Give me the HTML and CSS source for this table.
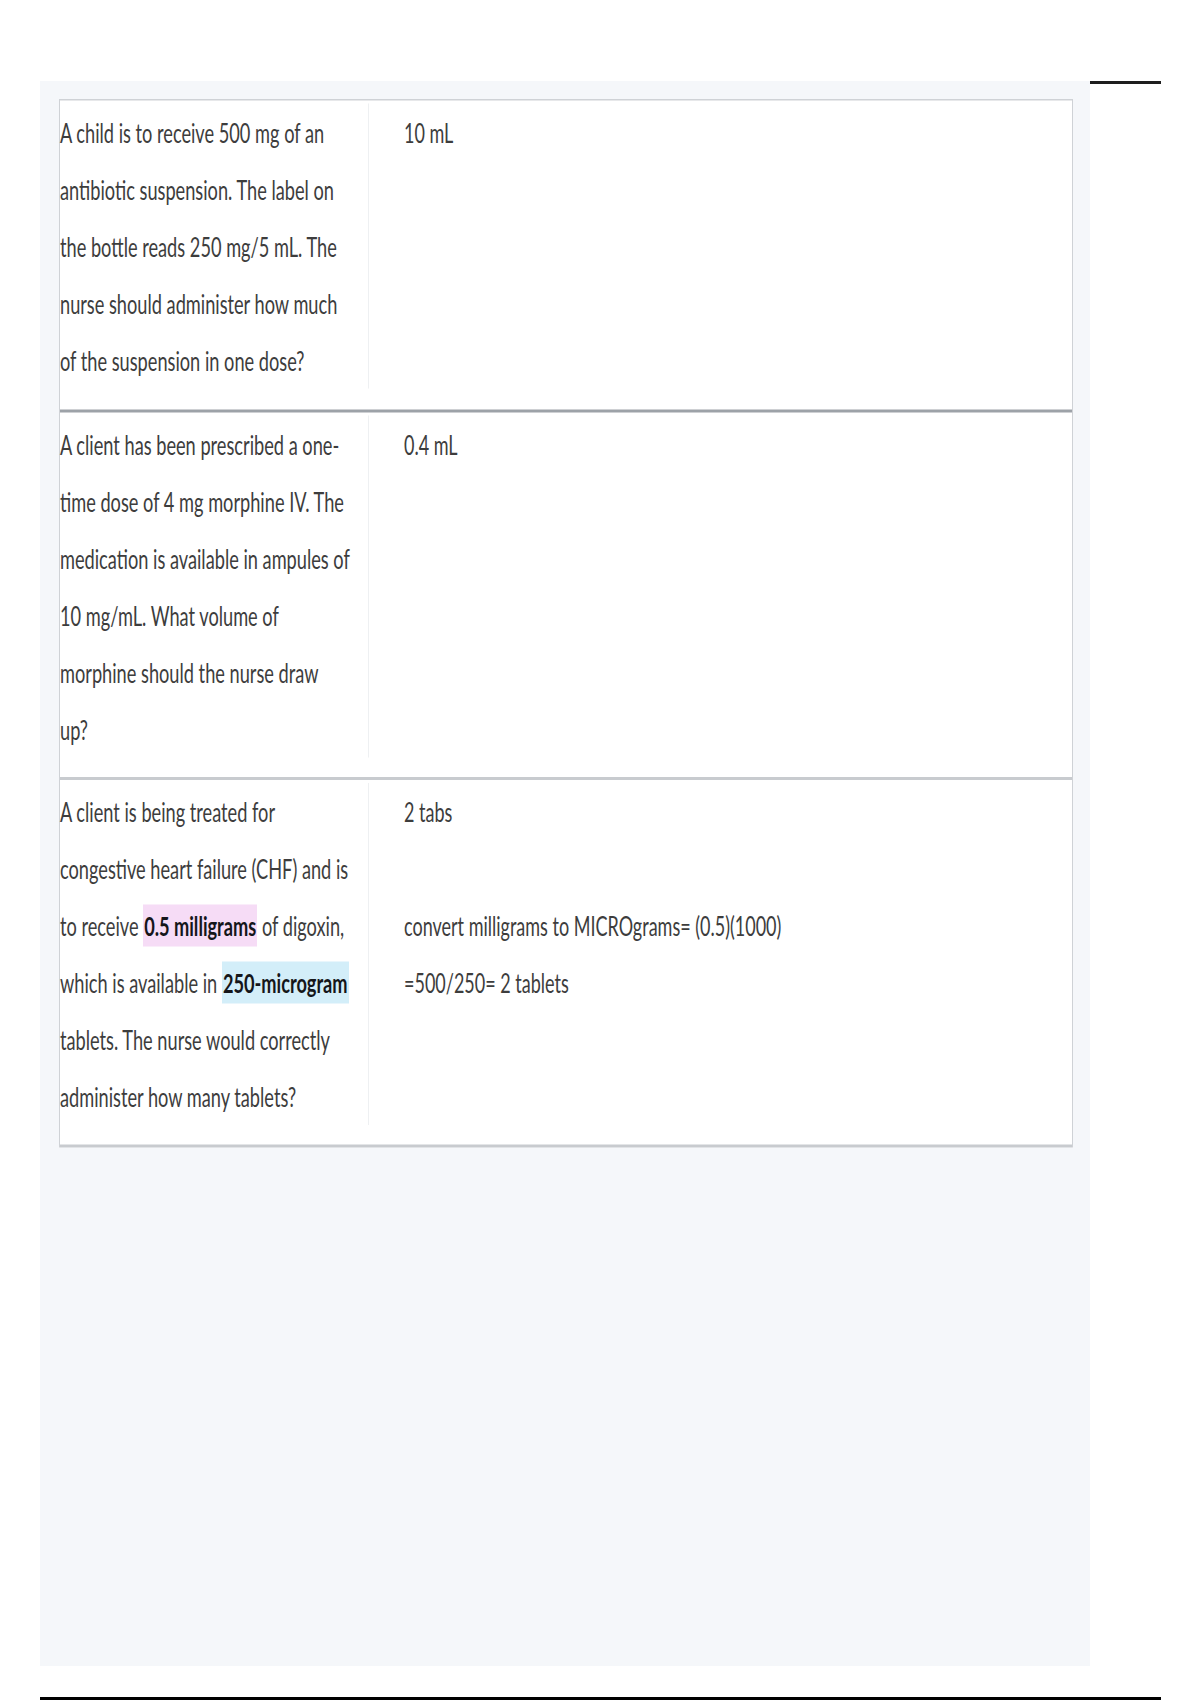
FILE: index.html
```html
<!DOCTYPE html>
<html lang="en">
<head>
    <meta charset="UTF-8">
    <meta name="viewport" content="width=device-width, initial-scale=1.0">
    <title>Dosage Calculations</title>
    <link rel="stylesheet" href="styles.css">
</head>
<body>
    <div class="page">
        <div class="top">
            <div class="panel">
                <div class="qa-table">
                    <div class="qa-row row-dark">
                        <div class="q">A child is to receive 500 mg of an antibiotic suspension. The label on the bottle reads 250 mg/5 mL. The nurse should administer how much of the suspension in one dose?</div>
                        <div class="a">10 mL</div>
                    </div>
                    <div class="qa-row">
                        <div class="q">A client has been prescribed a one-time dose of 4 mg morphine IV. The medication is available in ampules of 10 mg/mL. What volume of morphine should the nurse draw<br>up?</div>
                        <div class="a">0.4 mL</div>
                    </div>
                    <div class="qa-row">
                        <div class="q">A client is being treated for congestive heart failure (CHF) and is to receive <span class="hl hl-pink">0.5 milligrams</span> of digoxin, which is available in <span class="hl hl-blue">250-microgram</span> tablets. The nurse would correctly administer how many tablets?</div>
                        <div class="a">
                            <p>2 tabs</p>
                            <p class="gap">convert milligrams to MICROgrams= (0.5)(1000)</p>
                            <p>=500/250= 2 tablets</p>
                        </div>
                    </div>
                </div>
            </div>
            <div class="side"></div>
        </div>
        <div class="bottom-rule"></div>
    </div>
</body>
</html>
```

FILE: styles.css
```css
body {
    margin: 0;
    background-color: #ffffff;
    font-family: Lato, "Open Sans", sans-serif;
    color: #3d3d3d;
}
.page {
    width: 1121px;
    margin-left: 40px;
    padding-top: 81px;
}
.top {
    display: flex;
}
.panel {
    width: 1050px;
    height: 1585px;
    box-sizing: border-box;
    padding: 18px 17px 0 19px;
    background-color: #f5f7fa;
    overflow: hidden;
}
.side {
    flex: 1;
    border-top: 3px solid #1e1e1e;
    height: 0;
}
.bottom-rule {
    margin-top: 31px;
    border-top: 3px solid #000000;
}

/* screenshot is stretched vertically, so the table is scaled the same way */
.qa-table {
    background-color: #ffffff;
    border: 1px solid #cfd2d6;
    border-bottom: none;
    transform: scaleY(1.5);
    transform-origin: top left;
}
.qa-row {
    display: grid;
    grid-template-columns: 309px 1fr;
    padding: 2px 0 13px;
    border-bottom: 2px solid #c8cbcf;
}
.row-dark {
    padding-bottom: 14px;
    border-bottom-color: #9da2a8;
}
.q {
    box-sizing: border-box;
    padding-right: 16px;
    border-right: 1px solid #eef0f2;
    font-size: 18.2px;
    line-height: 38px;
}
.a {
    padding-left: 35px;
    font-size: 18px;
    line-height: 38px;
}
.a p {
    margin: 0;
}
.a .gap {
    margin-top: 38px;
}
.hl {
    font-weight: 700;
    color: #15161a;
    padding: 3px 1px;
}
.hl-pink {
    background-color: #f6dcf6;
}
.hl-blue {
    background-color: #d3eef9;
}
```
